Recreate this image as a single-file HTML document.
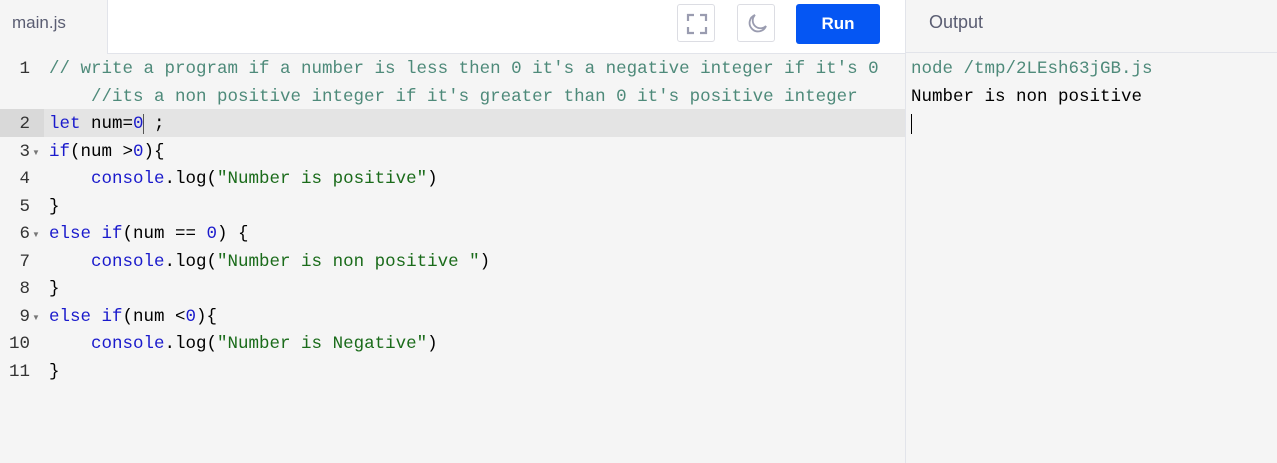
<!DOCTYPE html>
<html><head><style>
body{margin:0;width:1277px;height:463px;background:#f5f5f5;font-family:"Liberation Sans",sans-serif;overflow:hidden;position:relative}
.hdr{position:absolute;left:0;top:0;width:905px;height:53px;background:#fff;border-bottom:1px solid #e2e4ea}
.tab{position:absolute;left:0;top:0;width:108px;height:54px;background:#f5f5f5;border-right:1px solid #e2e4ea;color:#5a5d72;font-size:17px;line-height:46px;padding-left:12px;box-sizing:border-box}
.btn{position:absolute;top:4px;width:38px;height:38px;border:1px solid #dcdde3;border-radius:3px;box-sizing:border-box;background:#fff}
.run{position:absolute;left:796px;top:4px;width:84px;height:40px;background:#0556f3;border-radius:3px;color:#fff;font-weight:bold;font-size:17px;text-align:center;line-height:39px}
.ohdr{position:absolute;left:905px;top:0;width:372px;height:53px;background:#f5f5f5;border-left:1px solid #e2e4ea;border-bottom:1px solid #e2e4ea;color:#5a5d72;font-size:18px;line-height:44px;padding-left:23px;box-sizing:border-box}
.vline{position:absolute;left:905px;top:53px;width:1px;height:410px;background:#e2e4ea}
.code{position:absolute;left:0;top:56px;font-family:"Liberation Mono",monospace;font-size:17.5px;line-height:27.5px;white-space:pre;color:#000}
.ln{display:inline-block;width:30px;text-align:right;color:#333;margin-right:19px}
.c{color:#4e8a7a}.k{color:#1a1acc}.n{color:#1a1acc}.s{color:#1a6b1a}
.hl{position:absolute;left:0;top:109px;width:905px;height:28px;background:#e4e4e4}
.hlg{position:absolute;left:0;top:109px;width:44px;height:28px;background:#d9d9d9}
.out{position:absolute;left:911px;top:56px;font-family:"Liberation Mono",monospace;font-size:17.5px;line-height:27.5px;white-space:pre}
.fold{font-size:8px;color:#777;position:absolute;left:32px}
</style></head><body>
<div class="hdr"></div>
<div class="tab">main.js</div>
<div class="btn" style="left:677px"><svg width="38" height="38" viewBox="0 0 38 38" fill="none" stroke="#9a9cb0" stroke-width="2.2"><path d="M10 16V10h6M22 10h6v6M28 22v6h-6M16 28h-6v-6"/></svg></div>
<div class="btn" style="left:737px"><svg width="38" height="38" viewBox="0 0 38 38" fill="none" stroke="#9a9cb0" stroke-width="1.8"><path d="M17 10a8.5 8.5 0 1 0 11 11A7 7 0 0 1 17 10z"/></svg></div>
<div class="run">Run</div>
<div class="ohdr">Output</div>
<div class="vline"></div>
<div class="hl"></div><div class="hlg"></div>
<div class="code"><span class="ln">1</span><span class="c">// write a program if a number is less then 0 it's a negative integer if it's 0</span>
<span class="ln"></span><span class="c">    //its a non positive integer if it's greater than 0 it's positive integer</span>
<span class="ln">2</span><span class="k">let</span> num=<span class="n">0</span><span style="border-left:1px solid #555;margin-left:-1px"></span> ;
<span class="ln">3</span><span class="k">if</span>(num &gt;<span class="n">0</span>){
<span class="ln">4</span>    <span class="k">console</span>.log(<span class="s">"Number is positive"</span>)
<span class="ln">5</span>}
<span class="ln">6</span><span class="k">else if</span>(num == <span class="n">0</span>) {
<span class="ln">7</span>    <span class="k">console</span>.log(<span class="s">"Number is non positive "</span>)
<span class="ln">8</span>}
<span class="ln">9</span><span class="k">else if</span>(num &lt;<span class="n">0</span>){
<span class="ln">10</span>    <span class="k">console</span>.log(<span class="s">"Number is Negative"</span>)
<span class="ln">11</span>}</div>
<div class="fold" style="top:148px">▼</div><div class="fold" style="top:230px">▼</div><div class="fold" style="top:313px">▼</div>
<div class="out"><span style="color:#4e8a7a">node /tmp/2LEsh63jGB.js</span>
Number is non positive
<span style="border-left:1.5px solid #000"></span></div>
</body></html>
